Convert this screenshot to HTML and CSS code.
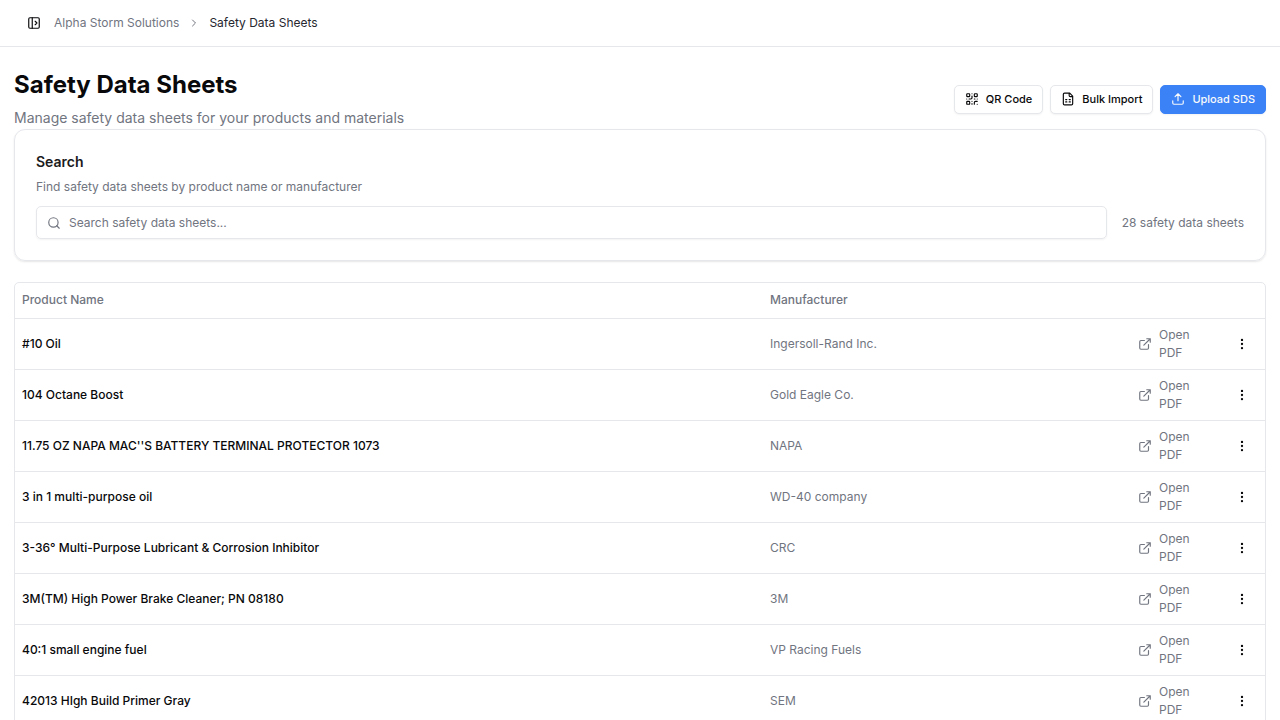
FILE: index.html
```html
<!DOCTYPE html>
<html lang="en">
<head>
<meta charset="utf-8">
<meta name="viewport" content="width=device-width, initial-scale=1">
<title>Safety Data Sheets</title>
<link rel="stylesheet" href="styles.css">
</head>
<body>
<svg class="sprite" aria-hidden="true">
  <symbol id="external" viewBox="0 0 24 24"><path d="M15 3h6v6M10 14 21 3M18 13v6a2 2 0 0 1-2 2H5a2 2 0 0 1-2-2V8a2 2 0 0 1 2-2h6"/></symbol>
  <symbol id="dots" viewBox="0 0 24 24"><circle cx="12" cy="12" r="1"/><circle cx="12" cy="5" r="1"/><circle cx="12" cy="19" r="1"/></symbol>
</svg>
<header class="topbar">
  <button class="icon-button" type="button" aria-label="Toggle sidebar">
    <svg class="icon" viewBox="0 0 24 24"><rect x="3" y="3" width="18" height="18" rx="2"/><path d="M9 3v18M14 9l3 3-3 3"/></svg>
  </button>
  <nav class="crumbs" aria-label="Breadcrumb">
    <a class="crumb-link" href="#">Alpha Storm Solutions</a>
    <svg class="icon icon-chevron" viewBox="0 0 24 24"><path d="m9 18 6-6-6-6"/></svg>
    <span class="crumb-current" aria-current="page">Safety Data Sheets</span>
  </nav>
</header>
<main class="page">
  <div class="page-head">
    <div>
      <h1 class="title">Safety Data Sheets</h1>
      <p class="subtitle">Manage safety data sheets for your products and materials</p>
    </div>
    <div class="actions">
      <button class="button" type="button">
        <svg class="icon" viewBox="0 0 24 24"><rect x="3" y="3" width="5" height="5" rx="1"/><rect x="16" y="3" width="5" height="5" rx="1"/><rect x="3" y="16" width="5" height="5" rx="1"/><path d="M21 16h-3a2 2 0 0 0-2 2v3M21 21v.01M12 7v3a2 2 0 0 1-2 2H7M3 12h.01M12 3h.01M12 16v.01M16 12h1M21 12v.01M12 21v-1"/></svg>
        QR Code
      </button>
      <button class="button" type="button">
        <svg class="icon" viewBox="0 0 24 24"><path d="M15 2H6a2 2 0 0 0-2 2v16a2 2 0 0 0 2 2h12a2 2 0 0 0 2-2V7ZM14 2v4a2 2 0 0 0 2 2h4M8 13h2M14 13h2M8 17h2M14 17h2"/></svg>
        Bulk Import
      </button>
      <button class="button button-primary" type="button">
        <svg class="icon" viewBox="0 0 24 24"><path d="M21 15v4a2 2 0 0 1-2 2H5a2 2 0 0 1-2-2v-4M17 8l-5-5-5 5M12 3v12"/></svg>
        Upload SDS
      </button>
    </div>
  </div>
  <section class="card">
    <h2 class="card-title"><label for="search">Search</label></h2>
    <p class="card-text">Find safety data sheets by product name or manufacturer</p>
    <div class="search-row">
      <div class="search-box">
        <svg class="icon" viewBox="0 0 24 24"><circle cx="11" cy="11" r="8"/><path d="m21 21-4.3-4.3"/></svg>
        <input class="search-input" id="search" type="text" placeholder="Search safety data sheets...">
      </div>
      <span class="count">28 safety data sheets</span>
    </div>
  </section>
  <div class="table-wrap">
    <table class="table">
      <colgroup><col class="col-name"><col class="col-maker"><col class="col-open"><col class="col-menu"></colgroup>
      <thead><tr><th scope="col">Product Name</th><th scope="col">Manufacturer</th><td></td><td></td></tr></thead>
      <tbody>
        <tr><td class="name">#10 Oil</td><td class="maker">Ingersoll-Rand Inc.</td><td><a class="open" href="#"><svg class="icon"><use href="#external"/></svg><span>Open PDF</span></a></td><td><button class="menu" type="button" aria-label="More actions"><svg class="icon"><use href="#dots"/></svg></button></td></tr>
        <tr><td class="name">104 Octane Boost</td><td class="maker">Gold Eagle Co.</td><td><a class="open" href="#"><svg class="icon"><use href="#external"/></svg><span>Open PDF</span></a></td><td><button class="menu" type="button" aria-label="More actions"><svg class="icon"><use href="#dots"/></svg></button></td></tr>
        <tr><td class="name">11.75 OZ NAPA MAC''S BATTERY TERMINAL PROTECTOR 1073</td><td class="maker">NAPA</td><td><a class="open" href="#"><svg class="icon"><use href="#external"/></svg><span>Open PDF</span></a></td><td><button class="menu" type="button" aria-label="More actions"><svg class="icon"><use href="#dots"/></svg></button></td></tr>
        <tr><td class="name">3 in 1 multi-purpose oil</td><td class="maker">WD-40 company</td><td><a class="open" href="#"><svg class="icon"><use href="#external"/></svg><span>Open PDF</span></a></td><td><button class="menu" type="button" aria-label="More actions"><svg class="icon"><use href="#dots"/></svg></button></td></tr>
        <tr><td class="name">3-36° Multi-Purpose Lubricant &amp; Corrosion Inhibitor</td><td class="maker">CRC</td><td><a class="open" href="#"><svg class="icon"><use href="#external"/></svg><span>Open PDF</span></a></td><td><button class="menu" type="button" aria-label="More actions"><svg class="icon"><use href="#dots"/></svg></button></td></tr>
        <tr><td class="name">3M(TM) High Power Brake Cleaner; PN 08180</td><td class="maker">3M</td><td><a class="open" href="#"><svg class="icon"><use href="#external"/></svg><span>Open PDF</span></a></td><td><button class="menu" type="button" aria-label="More actions"><svg class="icon"><use href="#dots"/></svg></button></td></tr>
        <tr><td class="name">40:1 small engine fuel</td><td class="maker">VP Racing Fuels</td><td><a class="open" href="#"><svg class="icon"><use href="#external"/></svg><span>Open PDF</span></a></td><td><button class="menu" type="button" aria-label="More actions"><svg class="icon"><use href="#dots"/></svg></button></td></tr>
        <tr><td class="name">42013 HIgh Build Primer Gray</td><td class="maker">SEM</td><td><a class="open" href="#"><svg class="icon"><use href="#external"/></svg><span>Open PDF</span></a></td><td><button class="menu" type="button" aria-label="More actions"><svg class="icon"><use href="#dots"/></svg></button></td></tr>
      </tbody>
    </table>
  </div>
</main>
</body>
</html>
```
FILE: styles.css
```css
*, *::before, *::after { box-sizing: border-box; }
html { scrollbar-width: none; }
body {
  margin: 0;
  background: #fff;
  color: #09090b;
  font-family: Inter, "Liberation Sans", sans-serif;
  font-size: 12px;
  line-height: 18px;
}
h1, h2, p { margin: 0; }
a { color: inherit; text-decoration: none; }
button, input { font: inherit; color: inherit; }
.sprite { display: none; }
.icon {
  width: 14px;
  height: 14px;
  flex: none;
  fill: none;
  stroke: currentColor;
  stroke-width: 2;
  stroke-linecap: round;
  stroke-linejoin: round;
}
.topbar {
  display: flex;
  align-items: center;
  gap: 6px;
  height: 47px;
  padding: 0 20px;
  border-bottom: 1px solid #e5e7eb;
}
.icon-button {
  display: grid;
  place-items: center;
  width: 28px;
  height: 28px;
  padding: 0;
  border: 0;
  background: none;
}
.crumbs { display: flex; align-items: center; gap: 9px; color: #71757f; }
.icon-chevron { width: 12px; height: 12px; }
.crumb-current { color: #27272f; }
.page { padding: 22px 14px; }
.page-head {
  display: flex;
  align-items: center;
  justify-content: space-between;
  height: 60px;
}
.title { font-size: 24px; line-height: 32px; font-weight: 700; }
.subtitle { margin-top: 6px; font-size: 14px; line-height: 22px; color: #71757f; }
.actions { display: flex; gap: 7px; }
.button {
  display: flex;
  align-items: center;
  gap: 7px;
  height: 29px;
  padding: 0 10px;
  border: 1px solid #e5e7eb;
  border-radius: 5px;
  background: #fff;
  box-shadow: 0 1px 2px #0000000d;
  font-size: 11px;
  font-weight: 500;
}
.button-primary { background: #3b82f6; border-color: #3b82f6; color: #f8fafc; }
.card {
  padding: 22px 21px 21px;
  border: 1px solid #e5e7eb;
  border-radius: 11px;
  box-shadow: 0 1px 2px #0000001a;
}
.card-title { font-size: 14px; line-height: 20px; font-weight: 600; color: #1b1b20; }
.card-text { margin: 6px 0 10px; color: #71757f; }
.search-row { display: flex; align-items: center; gap: 15px; }
.search-box {
  display: flex;
  flex: 1;
  align-items: center;
  gap: 8px;
  height: 33px;
  padding: 0 10px;
  border: 1px solid #e5e7eb;
  border-radius: 5px;
  box-shadow: 0 1px 2px #0000000d;
  color: #71757f;
}
.search-input {
  flex: 1;
  min-width: 0;
  padding: 0;
  border: 0;
  outline: 0;
  background: none;
}
.search-input::placeholder { color: #71757f; opacity: 1; }
.count { color: #71757f; }
.table-wrap {
  margin-top: 21px;
  border: 1px solid #e5e7eb;
  border-radius: 5px;
}
.table { width: 100%; table-layout: fixed; border-collapse: collapse; }
.col-menu { width: 45px; }
.col-open { width: 89px; }
.col-maker { width: 368px; }
th, td { padding: 7px; text-align: left; vertical-align: middle; }
thead tr { height: 35px; }
th { font-weight: 500; color: #71757f; }
tr { border-bottom: 1px solid #e5e7eb; }
.name { font-weight: 500; }
.maker { color: #71757f; }
.open { display: flex; align-items: center; gap: 7px; padding-right: 18px; color: #71757f; }
.menu {
  display: grid;
  place-items: center;
  width: 29px;
  height: 29px;
  padding: 0;
  border: 0;
  background: none;
}
```
